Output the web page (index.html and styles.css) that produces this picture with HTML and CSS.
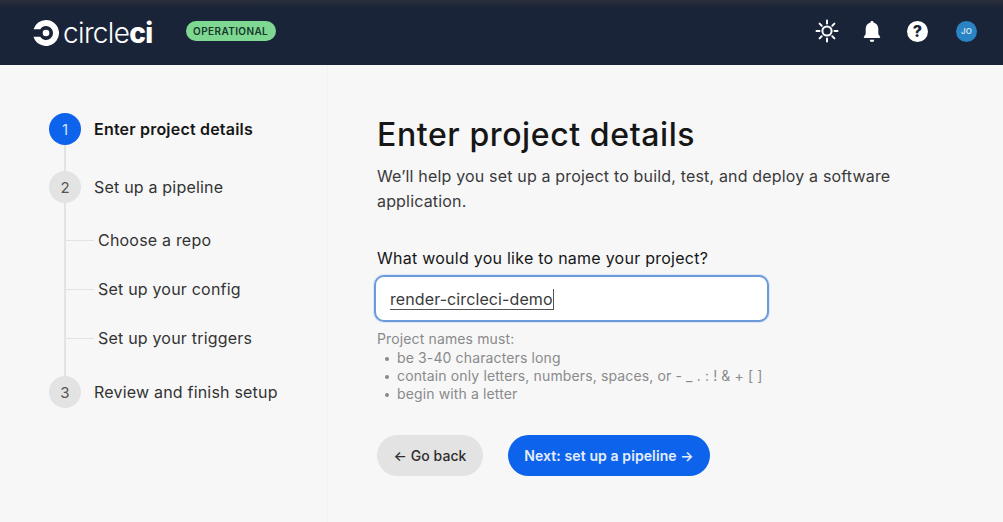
FILE: index.html
```html
<!DOCTYPE html>
<html lang="en">
<head>
<meta charset="utf-8">
<title>Enter project details</title>
<link rel="stylesheet" href="styles.css">
</head>
<body>
<header class="topbar">
  <div class="brand">
    <svg class="logo-mark" viewBox="1.5 1.5 25 25" aria-hidden="true">
      <path d="M14 1.500a12.500 12.500 0 1 1-12 16h6.400a6.700 6.700 0 1 0 0-7H2A12.500 12.500 0 0 1 14 1.500z" fill="#fff"/>
      <circle cx="14" cy="14" r="3.200" fill="#fff"/>
    </svg>
    <span class="wordmark">circle<b>ci</b></span>
  </div>
  <span class="status">OPERATIONAL</span>
  <div class="actions">
    <svg class="icon" viewBox="0 0 24 24" aria-hidden="true">
      <circle cx="12" cy="12" r="4.600" fill="none" stroke="#fff" stroke-width="2"/>
      <path d="M12 1.500v3M12 19.500v3M1.500 12h3M19.500 12h3M4.600 4.600l2.100 2.100M17.300 17.300l2.100 2.100M4.600 19.400l2.100-2.100M17.300 6.700l2.100-2.100" stroke="#fff" stroke-width="2" stroke-linecap="round"/>
    </svg>
    <svg class="icon bell" viewBox="0 0 24 24" aria-hidden="true">
      <path d="M12 2c.9 0 1.500.6 1.600 1.400 3 .8 4.700 3.300 4.700 6.400v5.300l1.800 2.700c.3.500 0 1.200-.7 1.200H4.600c-.7 0-1-.7-.7-1.200l1.800-2.700V9.800c0-3.100 1.700-5.600 4.700-6.400C10.500 2.600 11.100 2 12 2z" fill="#fff"/>
      <path d="M9.700 20.800h4.600a2.300 2.300 0 0 1-4.600 0z" fill="#fff"/>
    </svg>
    <span class="help">?</span>
    <span class="avatar">JO</span>
  </div>
</header>
<div class="layout">
  <nav class="steps">
    <div class="rail"></div>
    <div class="step current"><span class="num">1</span><span>Enter project details</span></div>
    <div class="step second"><span class="num">2</span><span>Set up a pipeline</span></div>
    <div class="sub first">Choose a repo</div>
    <div class="sub">Set up your config</div>
    <div class="sub">Set up your triggers</div>
    <div class="step last"><span class="num">3</span><span>Review and finish setup</span></div>
  </nav>
  <main class="content">
    <h1>Enter project details</h1>
    <p class="lead">We’ll help you set up a project to build, test, and deploy a software application.</p>
    <label class="field-label" for="project">What would you like to name your project?</label>
    <div class="input"><span class="value" id="project">render-circleci-demo</span></div>
    <div class="rules">
      <div>Project names must:</div>
      <ul>
        <li>be 3-40 characters long</li>
        <li>contain only letters, numbers, spaces, or - _ . : ! &amp; + [ ]</li>
        <li>begin with a letter</li>
      </ul>
    </div>
    <div class="buttons">
      <button class="btn back">← Go back</button>
      <button class="btn next">Next: set up a pipeline →</button>
    </div>
  </main>
</div>
</body>
</html>
```
FILE: styles.css
```css
* { box-sizing: border-box; }
html, body { margin: 0; height: 100%; }
body {
  width: 1003px;
  height: 522px;
  overflow: hidden;
  background: #f7f7f8;
  font-family: Inter, "Liberation Sans", sans-serif;
  color: #333;
}
.topbar {
  height: 65px;
  display: flex;
  align-items: center;
  padding: 0 26px 0 33px;
  background: linear-gradient(#2a2f3a 0, #1a2438 8px, #1a2438 100%);
}
.brand { display: flex; align-items: center; gap: 4px; }
.logo-mark { width: 26px; height: 26px; }
.wordmark {
  color: #fff;
  font-size: 28px;
  line-height: 30px;
  letter-spacing: -0.65px;
  font-weight: 300;
}
.wordmark b { font-weight: 800; }
.status {
  margin: 0 0 3px 33px;
  width: 90px;
  height: 20px;
  border-radius: 10px;
  background: #7fd892;
  color: #16372a;
  font-size: 10px;
  font-weight: 600;
  letter-spacing: 0.4px;
  display: flex;
  align-items: center;
  justify-content: center;
}
.actions { margin: 0 0 3px auto; display: flex; align-items: center; }
.icon { width: 24px; height: 24px; }
.bell { margin-left: 21px; }
.help {
  margin-left: 23px;
  width: 21px;
  height: 21px;
  border-radius: 50%;
  background: #fff;
  color: #1a2438;
  font-size: 16px;
  font-weight: 800;
  display: flex;
  align-items: center;
  justify-content: center;
}
.avatar {
  margin-left: 28px;
  width: 21px;
  height: 21px;
  border-radius: 50%;
  background: #2a83c2;
  color: #cfe4f2;
  font-size: 8px;
  font-weight: 600;
  display: flex;
  align-items: center;
  justify-content: center;
}
.layout { display: flex; height: 457px; }
.steps {
  position: relative;
  width: 328px;
  padding: 48px 0 0 49px;
  border-right: 1px solid #f1f2f2;
  font-size: 16px;
}
.rail {
  position: absolute;
  left: 64px;
  top: 80px;
  width: 2px;
  height: 250px;
  background: #e3e3e3;
}
.step {
  position: relative;
  display: flex;
  align-items: center;
  gap: 13px;
  height: 32px;
  letter-spacing: 0.2px;
}
.num {
  width: 32px;
  height: 32px;
  border-radius: 50%;
  background: #e3e3e3;
  color: #555;
  font-size: 15px;
  font-weight: 400;
  letter-spacing: 0;
  display: flex;
  align-items: center;
  justify-content: center;
  flex: none;
}
.current { font-weight: 600; color: #161616; letter-spacing: 0.2px; }
.current .num { background: #0e63ec; color: #cfe0fb; }
.second { margin-top: 26px; }
.sub {
  position: relative;
  height: 49px;
  margin-left: 49px;
  line-height: 49px;
  letter-spacing: 0.2px;
  white-space: nowrap;
}
.sub.first { margin-top: 13px; }
.sub::before {
  content: "";
  position: absolute;
  left: -33px;
  top: 24px;
  width: 29px;
  height: 1px;
  background: #e3e3e3;
}
.last { margin-top: 13px; }
.content { flex: 1; padding: 50px 0 0 49px; }
h1 {
  margin: 0;
  font-size: 32px;
  line-height: 40px;
  font-weight: 500;
  letter-spacing: 0.6px;
  color: #161616;
}
.lead {
  margin: 9px 0 0;
  width: 540px;
  font-size: 16px;
  line-height: 25px;
  letter-spacing: 0.17px;
  color: #3a3a3a;
}
.field-label {
  display: block;
  margin-top: 32px;
  font-size: 16px;
  line-height: 24px;
  letter-spacing: 0.25px;
  color: #161616;
}
.input {
  margin-top: 5px;
  margin-left: -3px;
  width: 395px;
  height: 47px;
  padding: 2px 0 0 14px;
  border: 2px solid #6c9bdc;
  border-radius: 10px;
  background: #fff;
  box-shadow: 0 0 0 1px #dbe7f6;
  display: flex;
  align-items: center;
}
.value {
  font-size: 16px;
  line-height: 20px;
  letter-spacing: 0.1px;
  color: #3a3a3a;
  border-bottom: 1px solid #555;
  border-right: 1px solid #555;
}
.rules { margin-top: 8px; font-size: 14px; line-height: 18px; color: #8a8a8a; letter-spacing: 0.13px; }
.rules ul { margin: 1px 0 0; padding: 0 0 0 20px; list-style: none; }
.rules li::before {
  content: "";
  display: inline-block;
  width: 4px;
  height: 4px;
  margin: 0 8px 2px -12px;
  border-radius: 50%;
  background: #8a8a8a;
}
.buttons { display: flex; gap: 25px; margin-top: 32px; }
.btn {
  height: 41px;
  border: 0;
  border-radius: 21px;
  font-family: inherit;
  font-size: 14px;
  font-weight: 500;
  letter-spacing: 0.05px;
}
.back { width: 106px; background: #e3e3e3; color: #2e2e2e; }
.next { width: 202px; background: #0e63ec; color: #e4eefd; font-weight: 600; letter-spacing: 0.1px; }
```
